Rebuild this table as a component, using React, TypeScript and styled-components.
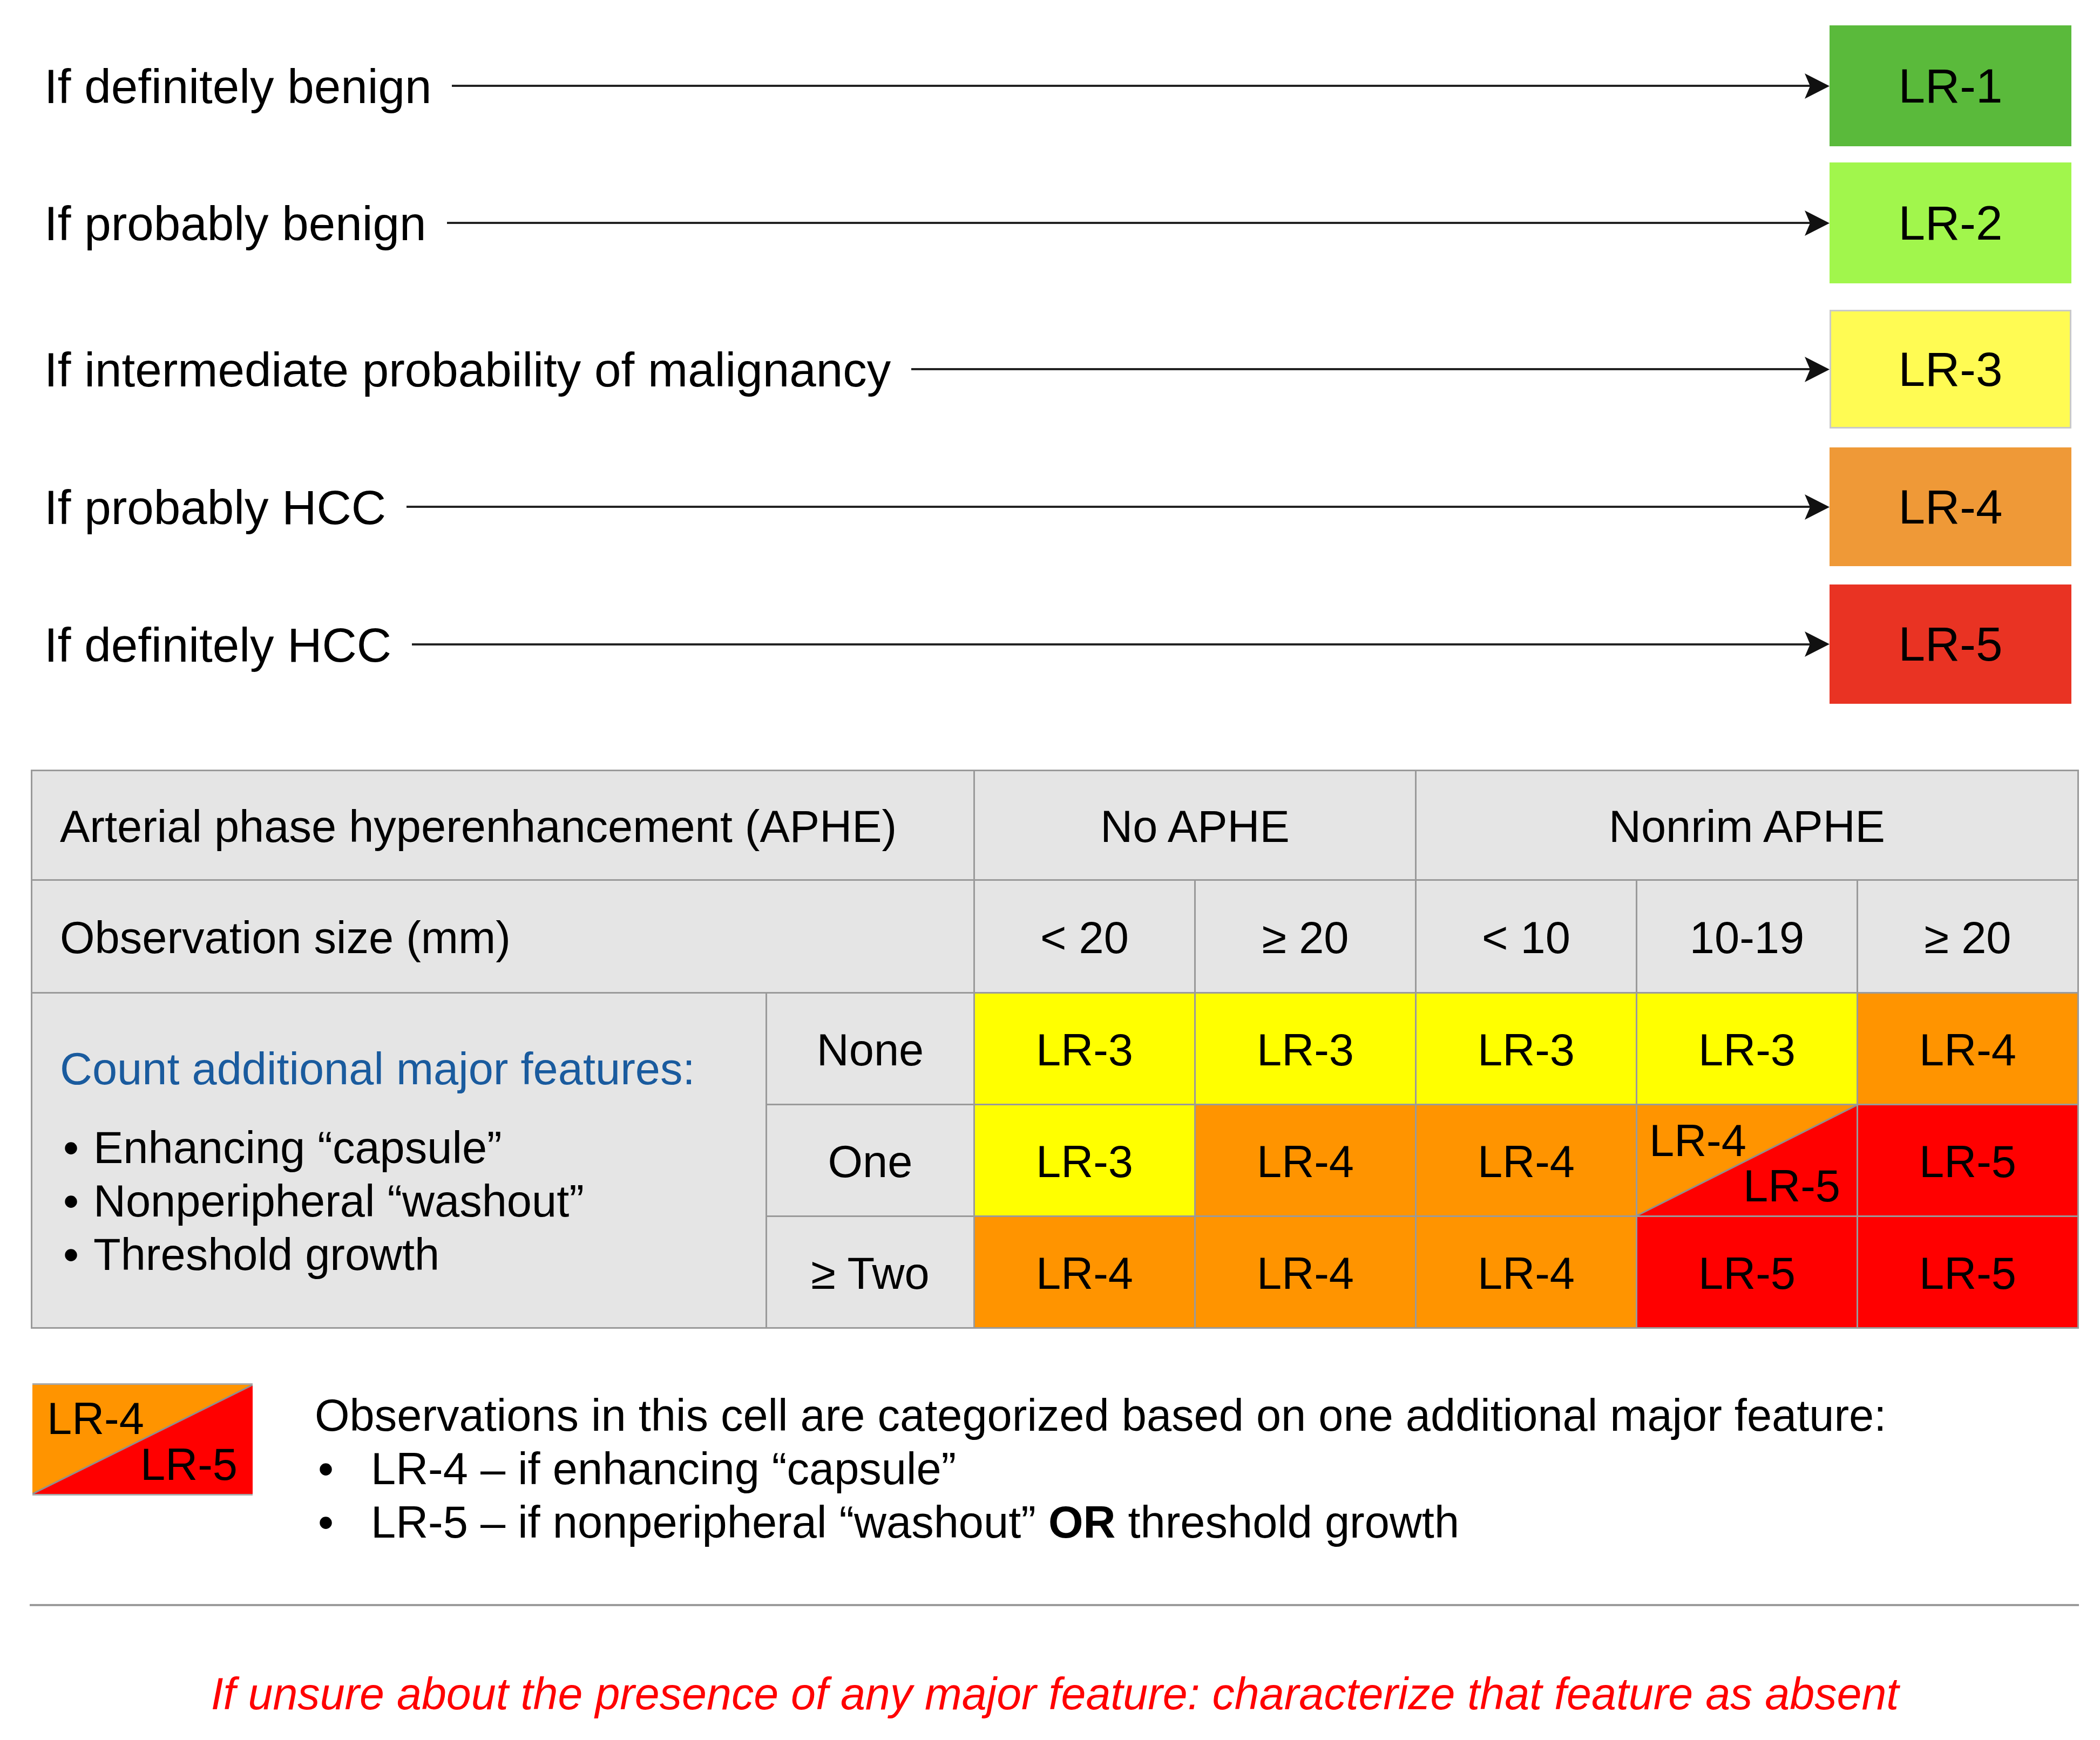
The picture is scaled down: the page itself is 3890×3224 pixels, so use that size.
import React from 'react';
import styled, { createGlobalStyle } from 'styled-components';

const GlobalStyle = createGlobalStyle`
  html, body {
    margin: 0;
    padding: 0;
    background: #fff;
  }
  body {
    font-family: 'Liberation Sans', Arial, Helvetica, sans-serif;
    color: #000;
  }
`;

const Page = styled.div`
  width: 3890px;
  height: 3224px;
  overflow: hidden;
  background: #fff;
`;

/* ---- top flow: label -> arrow -> category ---- */

const FlowList = styled.div`
  display: flex;
  flex-direction: column;
  padding: 0 53px 0 82px;
`;

const FlowRow = styled.div<{ $top: number; $h: number }>`
  display: flex;
  align-items: center;
  margin-top: ${p => p.$top}px;
  height: ${p => p.$h}px;
`;

const FlowLabel = styled.div`
  font-size: 89px;
  white-space: nowrap;
  margin-right: 38px;
  padding-top: 3px;
`;

const Arrow = styled.div`
  flex: 1;
  display: flex;
  align-items: center;
`;

const Shaft = styled.div`
  flex: 1;
  height: 4px;
  background: #222;
`;

const Head = styled.svg`
  display: block;
  flex-shrink: 0;
  width: 46px;
  height: 47px;
  margin-left: -10px;
`;

const Category = styled.div<{ $bg: string; $border?: string }>`
  box-sizing: border-box;
  width: 448px;
  height: 100%;
  background: ${p => p.$bg};
  border: 3px solid ${p => p.$border ?? p.$bg};
  display: flex;
  align-items: center;
  justify-content: center;
  font-size: 89px;
`;

/* ---- main table ---- */

const Table = styled.div`
  margin: 122px 39px 0 57px;
  display: grid;
  grid-template-columns: 1358px 382px repeat(5, 406px);
  grid-template-rows: 200px 206px 204px 204px 204px;
  gap: 3px;
  padding: 3px;
  background: #9a9a9a;
  font-size: 83px;
`;

const HeadCell = styled.div<{ $col: string; $left?: boolean }>`
  grid-column: ${p => p.$col};
  background: #e5e5e5;
  display: flex;
  align-items: center;
  justify-content: ${p => (p.$left ? 'flex-start' : 'center')};
  padding: 5px 0 0 ${p => (p.$left ? '51px' : '0')};
  white-space: nowrap;
`;

const FeatureCell = styled.div`
  grid-column: 1;
  grid-row: span 3;
  background: #e5e5e5;
  display: flex;
  flex-direction: column;
  justify-content: center;
  padding: 4px 0 0 51px;
`;

const FeatureTitle = styled.div`
  color: #1a5b9e;
  line-height: 99px;
  margin-bottom: 47px;
`;

const BulletRow = styled.div`
  display: flex;
  line-height: 99px;
  white-space: nowrap;
`;

const Dot = styled.span<{ $w: number }>`
  flex-shrink: 0;
  width: ${p => p.$w}px;
  padding-left: 6px;
  box-sizing: border-box;
`;

const ScoreCell = styled.div<{ $bg: string }>`
  background: ${p => p.$bg};
  display: flex;
  align-items: center;
  justify-content: center;
  padding-top: 5px;
`;

const SplitBox = styled.div<{ $w?: number; $h?: number; $edged?: boolean }>`
  box-sizing: border-box;
  ${p => (p.$w ? `width: ${p.$w}px; flex-shrink: 0;` : '')}
  ${p => (p.$h ? `height: ${p.$h}px;` : '')}
  display: flex;
  flex-direction: column;
  justify-content: space-between;
  padding: ${p => (p.$edged ? '21px 28px 13px 27px' : '24px 30px 13px 22px')};
  border-top: ${p => (p.$edged ? '3px solid #a8a8a8' : 'none')};
  border-bottom: ${p => (p.$edged ? '3px solid #a8a8a8' : 'none')};
  font-size: 83px;
  line-height: 83px;
  background: linear-gradient(
    to bottom right,
    #ff9400 calc(50% - 2px),
    #8f8f8f calc(50% - 1px),
    #8f8f8f calc(50% + 1px),
    #ff0000 calc(50% + 2px)
  );

  span:first-child {
    align-self: flex-start;
  }
  span:last-child {
    align-self: flex-end;
  }
`;

/* ---- legend ---- */

const Legend = styled.div`
  display: flex;
  align-items: flex-start;
  margin: 101px 0 0 60px;
`;

const LegendText = styled.div`
  margin: 10px 0 0 115px;
  font-size: 83px;
  line-height: 99px;
`;

const Rule = styled.div`
  height: 4px;
  margin: 102px 39px 0 55px;
  background: #9b9b9b;
`;

const Warning = styled.div`
  margin: 116px 39px 0 57px;
  text-align: center;
  font-size: 82.6px;
  line-height: 93px;
  font-style: italic;
  color: #ff0000;
  white-space: nowrap;
`;

const YELLOW = '#ffff00';
const ORANGE = '#ff9400';
const RED = '#ff0000';

const flow = [
  { label: 'If definitely benign', cat: 'LR-1', bg: '#5aba3b', top: 47, h: 224 },
  { label: 'If probably benign', cat: 'LR-2', bg: '#a1f64c', top: 30, h: 224 },
  { label: 'If intermediate probability of malignancy', cat: 'LR-3', bg: '#fffb53', border: '#c9c9c9', top: 49, h: 220 },
  { label: 'If probably HCC', cat: 'LR-4', bg: '#ef9937', top: 35, h: 220 },
  { label: 'If definitely HCC', cat: 'LR-5', bg: '#e93323', top: 34, h: 221 },
];

const sizes = ['< 20', '≥ 20', '< 10', '10-19', '≥ 20'];

type Score = { text: string; bg: string } | 'split';

const rows: { count: string; scores: Score[] }[] = [
  {
    count: 'None',
    scores: [
      { text: 'LR-3', bg: YELLOW },
      { text: 'LR-3', bg: YELLOW },
      { text: 'LR-3', bg: YELLOW },
      { text: 'LR-3', bg: YELLOW },
      { text: 'LR-4', bg: ORANGE },
    ],
  },
  {
    count: 'One',
    scores: [
      { text: 'LR-3', bg: YELLOW },
      { text: 'LR-4', bg: ORANGE },
      { text: 'LR-4', bg: ORANGE },
      'split',
      { text: 'LR-5', bg: RED },
    ],
  },
  {
    count: '≥ Two',
    scores: [
      { text: 'LR-4', bg: ORANGE },
      { text: 'LR-4', bg: ORANGE },
      { text: 'LR-4', bg: ORANGE },
      { text: 'LR-5', bg: RED },
      { text: 'LR-5', bg: RED },
    ],
  },
];

const features = ['Enhancing “capsule”', 'Nonperipheral “washout”', 'Threshold growth'];

const App = () => {
  return (
    <Page>
      <GlobalStyle />
      <FlowList>
        {flow.map(f => (
          <FlowRow key={f.cat} $top={f.top} $h={f.h}>
            <FlowLabel>{f.label}</FlowLabel>
            <Arrow>
              <Shaft />
              <Head viewBox="0 0 46 47">
                <polygon points="0,0 46,23.5 0,47 10,23.5" fill="#111" />
              </Head>
            </Arrow>
            <Category $bg={f.bg} $border={f.border}>
              {f.cat}
            </Category>
          </FlowRow>
        ))}
      </FlowList>

      <Table>
        <HeadCell $col="1 / 3" $left>
          Arterial phase hyperenhancement (APHE)
        </HeadCell>
        <HeadCell $col="3 / 5">No APHE</HeadCell>
        <HeadCell $col="5 / 8">Nonrim APHE</HeadCell>

        <HeadCell $col="1 / 3" $left>
          Observation size (mm)
        </HeadCell>
        {sizes.map((s, i) => (
          <HeadCell key={i} $col="auto">
            {s}
          </HeadCell>
        ))}

        <FeatureCell>
          <FeatureTitle>Count additional major features:</FeatureTitle>
          {features.map(f => (
            <BulletRow key={f}>
              <Dot $w={62}>•</Dot>
              {f}
            </BulletRow>
          ))}
        </FeatureCell>

        {rows.map(r => (
          <React.Fragment key={r.count}>
            <HeadCell $col="auto">{r.count}</HeadCell>
            {r.scores.map((s, i) =>
              s === 'split' ? (
                <SplitBox key={i}>
                  <span>LR-4</span>
                  <span>LR-5</span>
                </SplitBox>
              ) : (
                <ScoreCell key={i} $bg={s.bg}>
                  {s.text}
                </ScoreCell>
              )
            )}
          </React.Fragment>
        ))}
      </Table>

      <Legend>
        <SplitBox $w={408} $h={208} $edged>
          <span>LR-4</span>
          <span>LR-5</span>
        </SplitBox>
        <LegendText>
          <div>Observations in this cell are categorized based on one additional major feature:</div>
          <BulletRow>
            <Dot $w={104}>•</Dot>
            LR-4 – if enhancing “capsule”
          </BulletRow>
          <BulletRow>
            <Dot $w={104}>•</Dot>
            <span>
              LR-5 – if nonperipheral “washout” <b>OR</b> threshold growth
            </span>
          </BulletRow>
        </LegendText>
      </Legend>

      <Rule />

      <Warning>
        If unsure about the presence of any major feature: characterize that feature as absent
      </Warning>
    </Page>
  );
};

export default App;
